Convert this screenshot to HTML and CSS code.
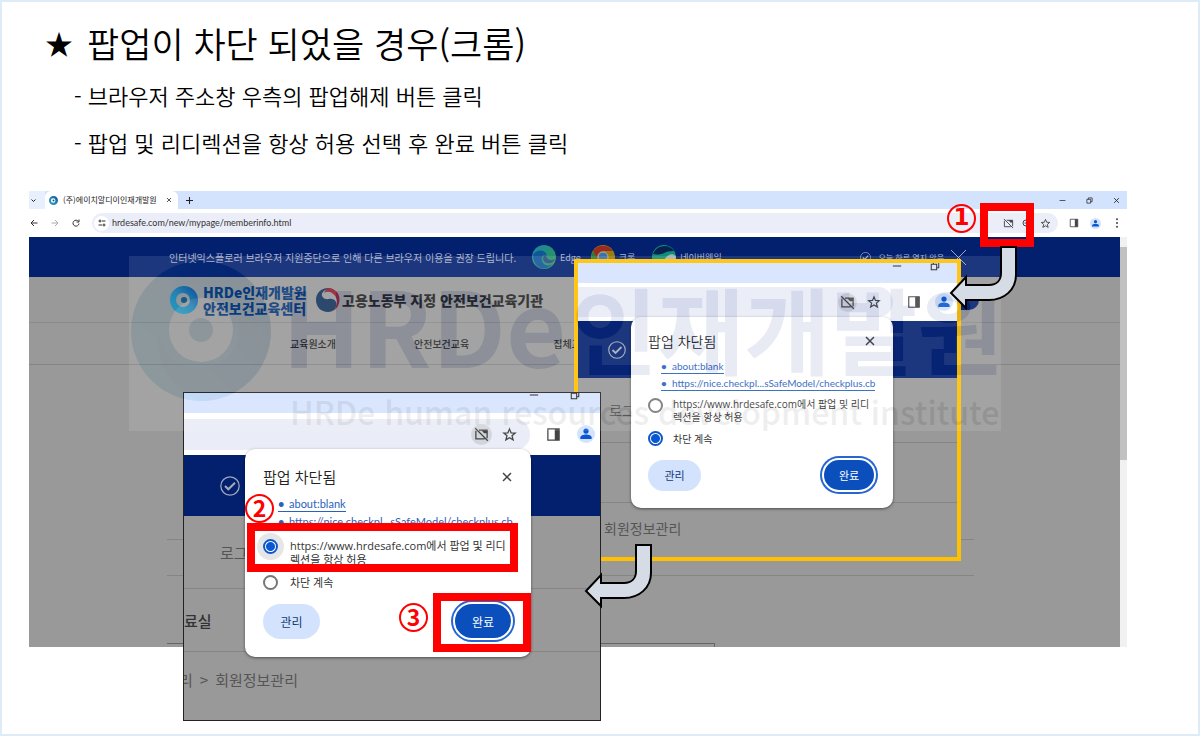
FILE: index.html
```html
<!DOCTYPE html>
<html lang="ko">
<head>
<meta charset="utf-8">
<meta name="viewport" content="width=device-width, initial-scale=1">
<title>팝업이 차단 되었을 경우(크롬)</title>
<link rel="stylesheet" href="styles.css">
</head>
<body>
<svg class="defs" aria-hidden="true">
  <defs>
    <linearGradient id="logoGrad" x1="0" y1="1" x2="1" y2="0">
      <stop offset="0" stop-color="#27a3bd"/><stop offset=".5" stop-color="#2583b5"/><stop offset="1" stop-color="#0c4a92"/>
    </linearGradient>
    <linearGradient id="edgeGrad" x1="0" y1="0" x2="1" y2="1">
      <stop offset="0" stop-color="#1c83a8"/><stop offset="1" stop-color="#2f9a49"/>
    </linearGradient>
    <symbol id="i-popup" viewBox="0 0 24 24"><path fill="none" stroke="currentColor" stroke-width="2" d="M8 5h13v13M17 19H3V6M2 2l20 20"/><path fill="currentColor" d="M12 5h9v5h-5z"/></symbol>
    <symbol id="i-star" viewBox="0 0 24 24"><path fill="none" stroke="currentColor" stroke-width="2" d="M12 3l2.500 6.300 6.700.400-5.200 4.300 1.800 6.500L12 17l-5.800 3.500L8 14 2.800 9.700l6.700-.400z"/></symbol>
    <symbol id="i-panel" viewBox="0 0 24 24"><path fill="none" stroke="currentColor" stroke-width="2" d="M3 3h18v18H3z"/><path fill="currentColor" d="M14 3h7v18h-7z"/></symbol>
    <symbol id="i-person" viewBox="0 0 24 24"><circle cx="12" cy="12" r="12" fill="#d3e3fd"/><circle cx="12" cy="8" r="3.500" fill="#0b57d0"/><path fill="#0b57d0" d="M4.500 18.500v-2c0-2.500 4-4 7.500-4s7.500 1.500 7.500 4v2z"/></symbol>
    <symbol id="i-close" viewBox="0 0 24 24"><path fill="none" stroke="currentColor" stroke-width="3" d="M4 4l16 16M20 4L4 20"/></symbol>
    <symbol id="i-min" viewBox="0 0 24 24"><path fill="none" stroke="currentColor" stroke-width="2.500" d="M2 12h20"/></symbol>
    <symbol id="i-restore" viewBox="0 0 24 24"><path fill="none" stroke="currentColor" stroke-width="2.500" d="M3 8h13v13H3zM8 8V3h13v13h-5"/></symbol>
    <symbol id="i-check" viewBox="0 0 24 24"><circle cx="12" cy="12" r="11" fill="none" stroke="currentColor" stroke-width="1.500"/><path fill="none" stroke="currentColor" stroke-width="2.500" d="M6 12l4 4 8-8"/></symbol>
    <symbol id="i-logo" viewBox="0 0 144 144"><path fill="url(#logoGrad)" fill-rule="evenodd" d="M72 2a70 70 0 1 0 0 140a70 70 0 1 0 0-140zM72 39a32 32 0 1 1 0 64a32 32 0 1 1 0-64z"/><path fill="#0c4a92" opacity=".35" d="M72 2a70 70 0 0 1 0 140C40 130 26 104 29 71c3 24 20 38 43 38 42-4 50-48 20-77C70 18 48 26 38 43 42 20 56 8 72 2z"/><circle cx="72" cy="71" r="12" fill="#2583b5"/></symbol>
    <symbol id="i-brand" viewBox="0 0 28 28"><path fill="url(#logoGrad)" fill-rule="evenodd" d="M14 0a14 14 0 1 0 0 28a14 14 0 1 0 0-28zM13 7a7 7 0 1 1 0 14a7 7 0 1 1 0-14z"/><circle cx="14" cy="14" r="3" fill="#14557f"/></symbol>
    <symbol id="i-arrow" viewBox="0 0 70 66"><path fill="#d6dce6" stroke="#000" stroke-width="2" d="M52 2h15v28c0 15-12 25-27 25H17v8L2 48l15-16v8h23c8 0 12-5 12-12z"/></symbol>
  </defs>
</svg>

<main class="slide">
  <header class="intro">
    <h1 class="intro-title"><span class="intro-star">★</span>팝업이 차단 되었을 경우(크롬)</h1>
    <ul class="intro-list">
      <li>- 브라우저 주소창 우측의 팝업해제 버튼 클릭</li>
      <li>- 팝업 및 리디렉션을 항상 허용 선택 후 완료 버튼 클릭</li>
    </ul>
  </header>

  <section class="browser">
    <div class="tabs">
      <span class="tab-search"><svg class="ico-5" viewBox="0 0 10 10"><path fill="none" stroke="#222" stroke-width="2" d="M1 3l4 4 4-4"/></svg></span>
      <div class="tab">
        <svg class="ico-9"><use href="#i-brand"/></svg>
        <span class="tab-name">(주)에이치알디이인재개발원</span>
        <svg class="ico-6"><use href="#i-close"/></svg>
      </div>
      <svg class="ico-7 tab-new" viewBox="0 0 10 10"><path stroke="#222" stroke-width="1.500" d="M5 0v10M0 5h10"/></svg>
      <div class="window-buttons">
        <svg class="ico-7"><use href="#i-min"/></svg>
        <svg class="ico-7"><use href="#i-restore"/></svg>
        <svg class="ico-7"><use href="#i-close"/></svg>
      </div>
    </div>
    <div class="toolbar">
      <div class="toolbar-nav">
        <svg class="ico-8" viewBox="0 0 16 16"><path fill="none" stroke="#333" stroke-width="2" d="M15 8H2M8 2L2 8l6 6"/></svg>
        <svg class="ico-8" viewBox="0 0 16 16"><path fill="none" stroke="#aaa" stroke-width="2" d="M1 8h13M8 2l6 6-6 6"/></svg>
        <svg class="ico-8" viewBox="0 0 16 16"><path fill="none" stroke="#333" stroke-width="2" d="M13 5a6 6 0 1 0 1 4M14 1v5H9"/></svg>
      </div>
      <div class="address">
        <span class="tune"><svg class="ico-8" viewBox="0 0 16 16"><path fill="none" stroke="#333" stroke-width="2" d="M8 4h7M1 12h7"/><circle cx="4" cy="4" r="2" fill="none" stroke="#333" stroke-width="2"/><circle cx="12" cy="12" r="2" fill="none" stroke="#333" stroke-width="2"/></svg></span>
        <span class="url">hrdesafe.com/new/mypage/memberinfo.html</span>
        <span class="address-icons">
          <svg class="ico-11"><use href="#i-popup"/></svg>
          <svg class="ico-8" viewBox="0 0 16 16"><path fill="none" stroke="#444" stroke-width="2" d="M8 2a6 6 0 1 0 0 12M5 8h6"/></svg>
          <svg class="ico-11"><use href="#i-star"/></svg>
        </span>
      </div>
      <div class="toolbar-end">
        <svg class="ico-10"><use href="#i-panel"/></svg>
        <svg class="ico-11"><use href="#i-person"/></svg>
        <svg class="ico-10" viewBox="0 0 10 10"><g fill="#444"><circle cx="5" cy="1.200" r="1"/><circle cx="5" cy="5" r="1"/><circle cx="5" cy="8.800" r="1"/></g></svg>
      </div>
    </div>
    <div class="viewport">
      <div class="site">
        <div class="notice">
          <span class="notice-text">인터넷익스플로러 브라우저 지원중단으로 인해 다른 브라우저 이용을 권장 드립니다.</span>
          <span class="notice-app"><svg class="ico-24" viewBox="0 0 24 24"><circle cx="12" cy="12" r="12" fill="url(#edgeGrad)"/><path fill="#12569a" d="M1 10c3-6 12-6 14 0-5-1-7 4-4 8 2 3 6 3 9 1-4 7-18 7-19-9z"/><path fill="#2b4c86" d="M14 10c-4 1-4 7 1 8 4 1 7-1 8-4-3 2-9 1-9-4z"/></svg>Edge</span>
          <span class="notice-app"><svg class="ico-24" viewBox="0 0 24 24"><circle cx="12" cy="12" r="12" fill="#9a7d10"/><path fill="#9c2a22" d="M2 6a12 12 0 0 1 20 0H12a6 6 0 0 0-5 9z"/><path fill="#2a7a3a" d="M2 6l5 9a6 6 0 0 0 6 3l-2 6A12 12 0 0 1 2 6z"/><circle cx="12" cy="12" r="5" fill="#3c70a6" stroke="#aaa" stroke-width="1"/></svg>크롬</span>
          <span class="notice-app"><svg class="ico-24" viewBox="0 0 24 24"><circle cx="12" cy="12" r="12" fill="#0e8f77"/><path fill="#07204f" d="M1 9a12 12 0 0 1 21-3c-8-1-11 5-21 3z"/><path fill="#a5b3b0" d="M24 12c-2-5-9-3-12 3l-3 7c10 4 15-3 15-10z"/></svg>네이버웨일</span>
          <span class="notice-close"><svg class="ico-11"><use href="#i-check"/></svg>오늘 하루 열지 않음<svg class="ico-15" viewBox="0 0 16 16"><path stroke="currentColor" d="M0 0l16 16M16 0L0 16"/></svg></span>
        </div>
        <div class="brand-row">
          <svg class="ico-28"><use href="#i-brand"/></svg>
          <span class="brand-name">HRDe인재개발원<br>안전보건교육센터</span>
          <svg class="ico-24" viewBox="0 0 24 24"><path fill="#14345c" d="M12 0C5 0 0 5 0 12s5 12 12 12c3 0 5-1 7-3 4-7-1-11-6-10C7 12 4 7 7 4c2-3 6-3 9-3-1-1-3-1-4-1z"/><path fill="#8d1f35" d="M13 0c8 1 12 8 10 15-1 4-3 6-6 8 6-7 5-14-1-18-3-2-6-1-8 0 1-3 3-5 5-5z"/></svg>
          <span class="brand-gov">고용노동부 지정 안전보건교육기관</span>
          <span class="brand-pill"></span>
        </div>
        <nav class="menu">
          <a href="#intro">교육원소개</a>
          <a href="#safety">안전보건교육</a>
          <a href="#group">집체교육</a>
        </nav>
        <div class="content">
          <div class="content-band"></div>
          <div class="content-box"></div>
        </div>
      </div>
      <div class="scrollbar"><div class="scrollbar-thumb"></div></div>
    </div>
  </section>

  <section class="shot shot-mid">
    <div class="shot-tabs"><svg class="ico-10"><use href="#i-min"/></svg><svg class="ico-10"><use href="#i-restore"/></svg></div>
    <div class="shot-toolbar">
      <div class="shot-address"><span class="round"><svg><use href="#i-popup"/></svg></span><svg class="ico-14"><use href="#i-star"/></svg></div>
      <svg class="ico-14"><use href="#i-panel"/></svg>
      <svg class="ico-18"><use href="#i-person"/></svg>
    </div>
    <div class="shot-band"><svg class="ico-18"><use href="#i-check"/></svg></div>
    <div class="shot-row row-login">로그인</div>
    <div class="shot-row"></div>
    <div class="shot-row row-path">회원정보관리</div>
    <form class="popup">
      <div class="popup-head"><h2>팝업 차단됨</h2><button type="button" class="popup-x" aria-label="닫기"><svg><use href="#i-close"/></svg></button></div>
      <div class="popup-links"><a href="#blank"><b>•</b>about:blank</a><a href="#nice"><b>•</b>https://nice.checkpl...sSafeModel/checkplus.cb</a></div>
      <label class="choice choice-allow"><input type="radio" name="mid"><span>https://www.hrdesafe.com에서 팝업 및 리디렉션을 항상 허용</span></label>
      <label class="choice"><input type="radio" name="mid" checked><span>차단 계속</span></label>
      <div class="popup-actions"><button type="button" class="btn">관리</button><button type="button" class="btn btn-done">완료</button></div>
    </form>
  </section>

  <section class="shot shot-big">
    <div class="shot-tabs"><svg class="ico-10"><use href="#i-min"/></svg><svg class="ico-10"><use href="#i-restore"/></svg></div>
    <div class="shot-toolbar">
      <div class="shot-address"><span class="round"><svg><use href="#i-popup"/></svg></span><svg class="ico-15"><use href="#i-star"/></svg></div>
      <svg class="ico-15"><use href="#i-panel"/></svg>
      <svg class="ico-18"><use href="#i-person"/></svg>
    </div>
    <div class="shot-band"><svg class="ico-20"><use href="#i-check"/></svg></div>
    <div class="shot-row row-login">로그인</div>
    <div class="shot-row row-room">료실</div>
    <div class="shot-row row-path"><span>리</span><span>&gt;</span><span>회원정보관리</span></div>
    <form class="popup">
      <div class="popup-head"><h2>팝업 차단됨</h2><button type="button" class="popup-x" aria-label="닫기"><svg><use href="#i-close"/></svg></button></div>
      <div class="popup-links"><a href="#blank"><b>•</b>about:blank</a><a href="#nice"><b>•</b>https://nice.checkpl...sSafeModel/checkplus.cb</a></div>
      <label class="choice choice-allow"><input type="radio" name="big" class="halo" checked><span>https://www.hrdesafe.com에서 팝업 및 리디렉션을 항상 허용</span></label>
      <label class="choice"><input type="radio" name="big"><span>차단 계속</span></label>
      <div class="popup-actions"><button type="button" class="btn">관리</button><button type="button" class="btn btn-done">완료</button></div>
    </form>
  </section>

  <div class="watermark">
    <svg class="watermark-logo"><use href="#i-logo"/></svg>
    <div class="watermark-text">
      <div class="watermark-name"><span class="watermark-latin">HRDe</span><span>인재개발원</span></div>
      <div class="watermark-sub">HRDe human resources development institute</div>
    </div>
  </div>

  <div class="frame frame-1"></div>
  <div class="frame frame-2"></div>
  <div class="frame frame-3"></div>
  <span class="step step-1">1</span>
  <span class="step step-2">2</span>
  <span class="step step-3">3</span>
  <svg class="arrow arrow-1"><use href="#i-arrow"/></svg>
  <svg class="arrow arrow-2"><use href="#i-arrow"/></svg>
</main>
</body>
</html>
```

FILE: styles.css
```css
* { box-sizing: border-box; }
body { margin: 0; font-family: "Noto Sans CJK KR", "Noto Sans", sans-serif; color: #000; }
svg { display: block; flex: none; }
.defs { position: absolute; width: 0; height: 0; }
a { color: inherit; text-decoration: none; }

.ico-5 { width: 5px; height: 5px; }
.ico-6 { width: 6px; height: 6px; }
.ico-7 { width: 7px; height: 7px; }
.ico-8 { width: 8px; height: 8px; }
.ico-9 { width: 9px; height: 9px; }
.ico-10 { width: 10px; height: 10px; }
.ico-11 { width: 11px; height: 11px; }
.ico-14 { width: 14px; height: 14px; }
.ico-15 { width: 15px; height: 15px; }
.ico-18 { width: 18px; height: 18px; }
.ico-20 { width: 20px; height: 20px; }
.ico-24 { width: 24px; height: 24px; }
.ico-28 { width: 28px; height: 28px; }

.slide { position: relative; min-height: 100vh; border: 2px solid #dfebf7; background: #fff; overflow: hidden; }

/* heading */
.intro { padding: 17px 43px 0; }
.intro-title { display: flex; align-items: center; gap: 14px; margin: 0; font-size: 35px; line-height: 48px; font-weight: 350; }
.intro-star { font-size: 28px; }
.intro-list { margin: 5px 0 0; padding: 0 0 0 29px; list-style: none; font-size: 22px; line-height: 47px; font-weight: 350; }

/* browser window */
.browser { margin: 25px 71px 0 27px; }
.tabs { display: flex; align-items: center; height: 18px; background: #d3e2fd; color: #222; }
.tab-search { display: flex; align-items: center; align-self: stretch; width: 16px; padding-left: 2px; background: #e8effd; }
.tab { display: flex; align-items: center; align-self: stretch; gap: 5px; width: 133px; padding: 0 6px 0 4px; background: #fff; border-radius: 6px 6px 0 0; }
.tab-name { flex: 1; font-size: 8px; line-height: 16px; white-space: nowrap; }
.tab-new { margin-left: 8px; }
.window-buttons { display: flex; gap: 20px; margin-left: auto; padding-right: 7px; }
.toolbar { display: flex; align-items: center; height: 28px; background: #fff; color: #444; }
.toolbar-nav { display: flex; gap: 13px; width: 63px; padding-left: 1px; }
.address { display: flex; flex: 1; align-items: center; height: 20px; padding: 0 7px 0 2px; border-radius: 10px; background: #ebeef8; }
.tune { display: grid; place-items: center; width: 15px; height: 15px; border-radius: 50%; background: #fff; }
.url { margin-left: 3px; font: 9px/16px Lato, sans-serif; color: #333; }
.address-icons { display: flex; align-items: center; gap: 8px; margin-left: auto; }
.address-icons svg:last-child { margin-left: 2px; }
.toolbar-end { display: flex; align-items: center; gap: 11px; padding: 0 5px 0 11px; }
.viewport { display: flex; min-height: 410px; }
.scrollbar { width: 7px; background: #f1f1f1; padding-top: 10px; }
.scrollbar-thumb { height: 213px; background: #c1c1c1; }
.site { display: flex; flex: 1; flex-direction: column; min-width: 0; background: #999; }
.notice { display: flex; align-items: center; height: 40px; padding: 0 154px 0 140px; background: #03206f; color: #a9b1c9; font-size: 9px; white-space: nowrap; }
.notice-text { width: 363px; font-size: 10px; }
.notice-app { display: flex; align-items: center; gap: 4px; margin-right: 10px; }
.notice-app + .notice-app { margin-right: 17px; }
.notice-close { display: flex; align-items: center; gap: 7px; margin-left: auto; font-size: 8px; }
.brand-row { display: flex; align-items: center; height: 46px; padding: 0 141px; border-bottom: 1px solid #8a8a8a; font-weight: 900; white-space: nowrap; }
.brand-name { width: 118px; padding-left: 5px; font-size: 14px; line-height: 16px; color: #063777; }
.brand-gov { margin-left: 2px; font-size: 14px; color: #222; }
.brand-pill { width: 34px; height: 20px; margin-left: auto; border-radius: 10px; background: #03206f; }
.menu { display: flex; gap: 78px; height: 42px; padding-left: 261px; border-bottom: 1px solid #848484; font-size: 10px; line-height: 42px; font-weight: 500; color: #222; }
.menu a:last-child { margin-left: 6px; }
.content { display: flex; flex: 1; flex-direction: column; padding: 174px 146px 0 138px; }
.content-band { height: 37px; border: solid #858585; border-width: 1px 0; }
.content-box { flex: 1; width: 548px; margin-top: 67px; border: solid #666; border-width: 1px 1px 0 0; }

/* enlarged screenshots placed over the window */
.shot { position: absolute; display: flex; flex-direction: column; overflow: hidden; background: #999; color: #555; }
.shot-tabs { display: flex; flex: none; gap: 28px; justify-content: flex-end; background: #d6e4fd; color: #222; }
.shot-toolbar { display: flex; flex: none; align-items: center; background: #fff; color: #444; }
.shot-address { display: flex; flex: 1; align-items: center; justify-content: flex-end; background: #eaedf7; }
.round { display: grid; place-items: center; border-radius: 50%; background: #d3d5dc; }
.round svg { width: 15px; height: 15px; }
.shot-band { display: flex; flex: none; align-items: center; background: #03206f; color: #a3a9bd; }
.shot-row { display: flex; flex: none; align-items: center; border-bottom: 1px solid #858585; white-space: nowrap; }
.shot-row.row-path { border-bottom: 0; }
.row-room { color: #333; font-weight: 500; }

.shot-mid { left: 572px; top: 257px; width: 387px; height: 302px; border: 4px solid #ffc000; font-size: 14px; }
.shot-mid .shot-tabs { height: 20px; padding-right: 17px; }
.shot-mid .shot-tabs svg { margin-top: -2px; }
.shot-mid .shot-toolbar { height: 38px; padding-right: 4px; gap: 14px; }
.shot-mid .shot-address { height: 30px; padding-right: 12px; gap: 10px; border-radius: 0 15px 15px 0; }
.shot-mid .round { width: 19px; height: 19px; }
.shot-mid .shot-band { height: 57px; padding-left: 30px; }
.shot-mid .shot-row { height: 60px; }
.shot-mid .row-login { height: 65px; padding-left: 31px; }
.shot-mid .row-path { height: 50px; padding-left: 26px; }

.shot-big { left: 181px; top: 390px; width: 418px; height: 329px; border: 1px solid #222; font-size: 15px; }
.shot-big .shot-tabs { height: 20px; padding-right: 20px; gap: 31px; }
.shot-big .shot-tabs svg { margin-top: -3px; }
.shot-big .shot-toolbar { height: 42px; padding-right: 5px; gap: 16px; }
.shot-big .shot-address { height: 31px; padding-right: 13px; gap: 10px; border-radius: 0 15px 15px 0; }
.shot-big .round { width: 21px; height: 21px; }
.shot-big .shot-band { height: 61px; padding-left: 36px; }
.shot-big .shot-row { height: 63px; }
.shot-big .row-login { height: 73px; padding-left: 36px; }
.shot-big .row-path { height: 54px; gap: 7px; margin-left: -5px; }

/* blocked-popup dialog */
.popup { position: absolute; background: #fff; color: #333; box-shadow: 0 1px 3px rgba(0, 0, 0, .5); }
.popup-head { display: flex; justify-content: space-between; align-items: center; }
.popup h2 { margin: 0; font-size: inherit; font-weight: 350; color: #222; }
.popup-x { padding: 0; border: 0; background: none; color: #444; }
.popup-x svg { width: 12px; height: 12px; }
.popup-links { display: flex; flex-direction: column; align-items: flex-start; color: #2961bd; font-family: Lato, sans-serif; }
.popup-links a { display: flex; border-bottom: 1px solid #2961bd; white-space: nowrap; }
.popup-links b { width: 11px; }
.choice { display: flex; align-items: flex-start; font-family: "Open Sans", "Noto Sans CJK KR", sans-serif; word-break: break-all; }
.choice input { flex: none; appearance: none; width: 15px; height: 15px; margin: 0; border: 2px solid #777; border-radius: 50%; background: #fff; }
.choice input:checked { border-color: #0b57d0; background: radial-gradient(circle, #0b57d0 0 4px, #fff 5px); }
.choice .halo { box-shadow: 0 0 0 6px #e6e6e6; }
.popup-actions { display: flex; justify-content: space-between; align-items: center; }
.btn { border: 0; padding: 0; border-radius: 20px; background: #d3e3fd; color: #123a78; font-family: inherit; }
.btn-done { background: #0b4fbd; color: #fff; border: 2px solid #fff; box-shadow: 0 0 0 2px #2766d2; }

.shot-mid .popup { left: 53px; top: 54px; width: 262px; height: 191px; padding: 14px 17px; border-radius: 10px; font-size: 14px; line-height: 20px; }
.shot-mid .popup-links { margin: 8px 0 0 13px; font-size: 10px; line-height: 14px; gap: 2px; }
.shot-mid .choice { margin-top: 7px; gap: 10px; font-size: 10px; line-height: 16px; }
.shot-mid .choice-allow { line-height: 13px; padding-right: 4px; }
.shot-mid .popup-actions { margin-top: 11px; }
.shot-mid .btn { width: 53px; height: 31px; font-size: 11px; }
.shot-mid .btn-done { width: 54px; height: 34px; }

.shot-big .popup { left: 61px; top: 56px; width: 286px; height: 208px; padding: 17px 18px; border-radius: 10px; font-size: 15px; line-height: 22px; }
.shot-big .popup-links { margin: 8px 0 0 15px; font-size: 11px; line-height: 15px; gap: 2px; }
.shot-big .choice { margin-top: 8px; gap: 12px; font-size: 11px; line-height: 16px; }
.shot-big .choice-allow { margin-top: 9px; line-height: 14px; }
.shot-big .popup-actions { margin-top: 11px; }
.shot-big .btn { width: 57px; height: 35px; font-size: 12px; }
.shot-big .btn-done { width: 60px; height: 38px; }

/* translucent brand mark */
.watermark { position: absolute; left: 127px; top: 254px; display: flex; gap: 17px; width: 872px; height: 175px; background: #fff; opacity: .1; pointer-events: none; overflow: hidden; }
.watermark-logo { width: 144px; height: 144px; margin-top: 3px; }
.watermark-text { white-space: nowrap; }
.watermark-name { display: flex; align-items: baseline; height: 127px; margin-left: -8px; gap: 5px; font-size: 94px; line-height: 134px; font-weight: 700; color: #2a45a0; }
.watermark-latin { font-size: 104px; }
.watermark-sub { font: 500 32px/56px "Noto Sans CJK KR", sans-serif; color: #666; }

/* annotations */
.frame { position: absolute; border: 8px solid #f00; }
.frame-1 { left: 978px; top: 201px; width: 54px; height: 44px; }
.frame-2 { left: 245px; top: 521px; width: 271px; height: 49px; }
.frame-3 { left: 431px; top: 591px; width: 98px; height: 59px; }
.step { position: absolute; width: 29px; height: 29px; border: 2px solid #f00; border-radius: 50%; color: #f00; text-align: center; font: 700 23px/23px "Noto Sans CJK KR", sans-serif; }
.step-1 { left: 945px; top: 202px; font-family: "DejaVu Sans", sans-serif; }
.step-2 { left: 243px; top: 492px; background: #fff; }
.step-3 { left: 397px; top: 601px; }
.arrow { position: absolute; width: 70px; height: 66px; }
.arrow-1 { left: 947px; top: 243px; }
.arrow-2 { left: 582px; top: 541px; }
```
